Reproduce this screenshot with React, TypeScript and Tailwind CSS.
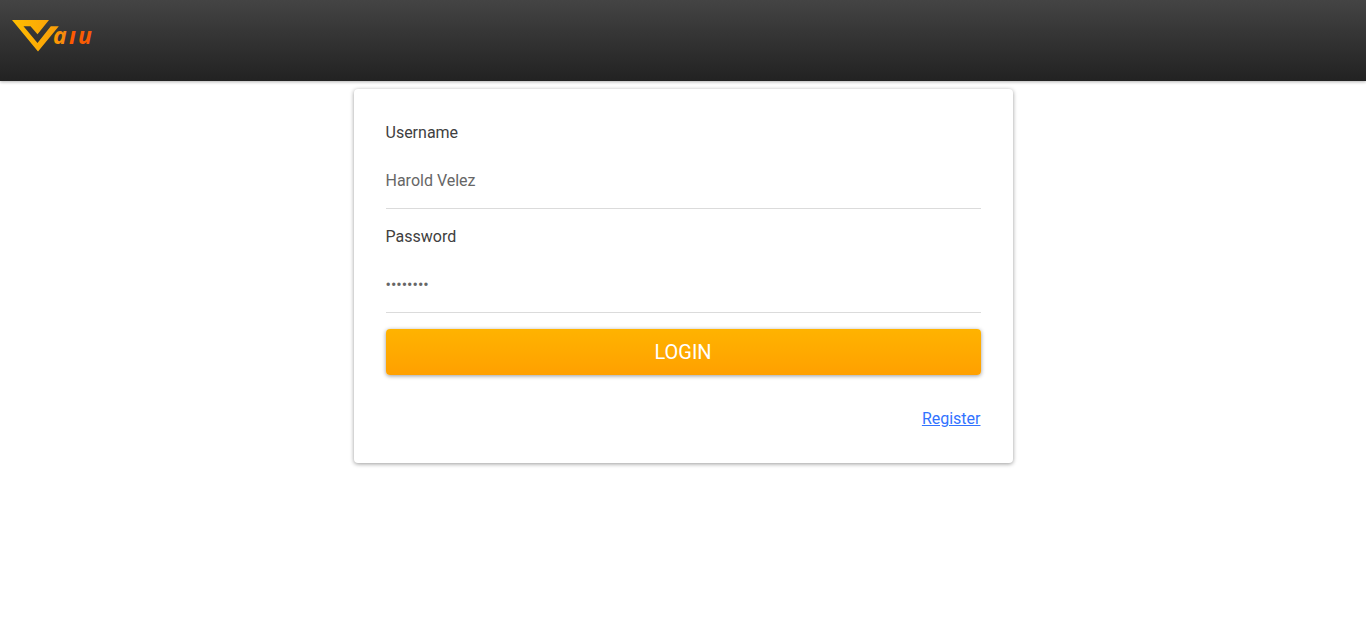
import { useState } from "react";

function Logo() {
  return (
    <svg width="84" height="36" viewBox="0 0 84 36" role="img" aria-label="Vaiu">
      <defs>
        <linearGradient id="mark" gradientUnits="userSpaceOnUse" x1="0" y1="0" x2="48" y2="0">
          <stop offset="0" stopColor="#ffbe00" />
          <stop offset="0.5" stopColor="#fcae05" />
          <stop offset="1" stopColor="#f99c08" />
        </linearGradient>
        <linearGradient id="letter" x1="0" y1="0" x2="1" y2="0">
          <stop offset="0" stopColor="#ff9c00" />
          <stop offset="1" stopColor="#f58410" />
        </linearGradient>
      </defs>
      <path
        d="M0 0H37L25.5 14.3L18.5 6.2H11.5L25.5 23L38.8 6.2H46.8L26 31.5Z"
        fill="url(#mark)"
      />
      <g
        fontFamily="'Noto Sans', 'Open Sans', sans-serif"
        fontSize="23"
        fontWeight="700"
        fontStyle="italic"
      >
        <text x="41" y="24" fill="url(#letter)">a</text>
        <text x="57" y="24" fill="#ff5a00">ı</text>
        <text x="66" y="24" fill="#f85c04">u</text>
      </g>
    </svg>
  );
}

type FieldProps = {
  id: string;
  label: string;
  type: string;
  initial: string;
};

function Field({ id, label, type, initial }: FieldProps) {
  const [value, setValue] = useState(initial);
  return (
    <div className="mb-4 flex flex-col">
      <label htmlFor={id} className="leading-6 text-[#404040]">
        {label}
      </label>
      <input
        id={id}
        name={id}
        type={type}
        value={value}
        onChange={(e) => setValue(e.target.value)}
        className="mt-2 h-14 w-full border-b border-[#dbdbdb] bg-transparent text-[#666] outline-none"
      />
    </div>
  );
}

export default function App() {
  return (
    <div className="min-h-screen bg-white font-['Roboto',sans-serif] text-base">
      <header className="bg-linear-to-b from-[#444] to-[#222] px-3 pt-5 pb-[25px] shadow-[0_1px_3px_rgba(0,0,0,0.3)]">
        <a href="#home" className="block w-fit">
          <Logo />
        </a>
      </header>
      <main className="px-4 pt-2">
        <form
          onSubmit={(e) => e.preventDefault()}
          className="mx-auto flex max-w-[659px] flex-col rounded bg-white p-8 shadow-[0_1px_4px_rgba(0,0,0,0.4)]"
        >
          <Field id="username" label="Username" type="text" initial="Harold Velez" />
          <Field id="password" label="Password" type="password" initial="password" />
          <button
            type="submit"
            className="h-[46px] rounded bg-linear-to-b from-[#ffb300] to-[#ffa000] text-xl text-white shadow-[0_1px_4px_rgba(0,0,0,0.4)]"
          >
            LOGIN
          </button>
          <a href="#register" className="mt-8 self-end leading-6 text-[#3273ff] underline">
            Register
          </a>
        </form>
      </main>
    </div>
  );
}
